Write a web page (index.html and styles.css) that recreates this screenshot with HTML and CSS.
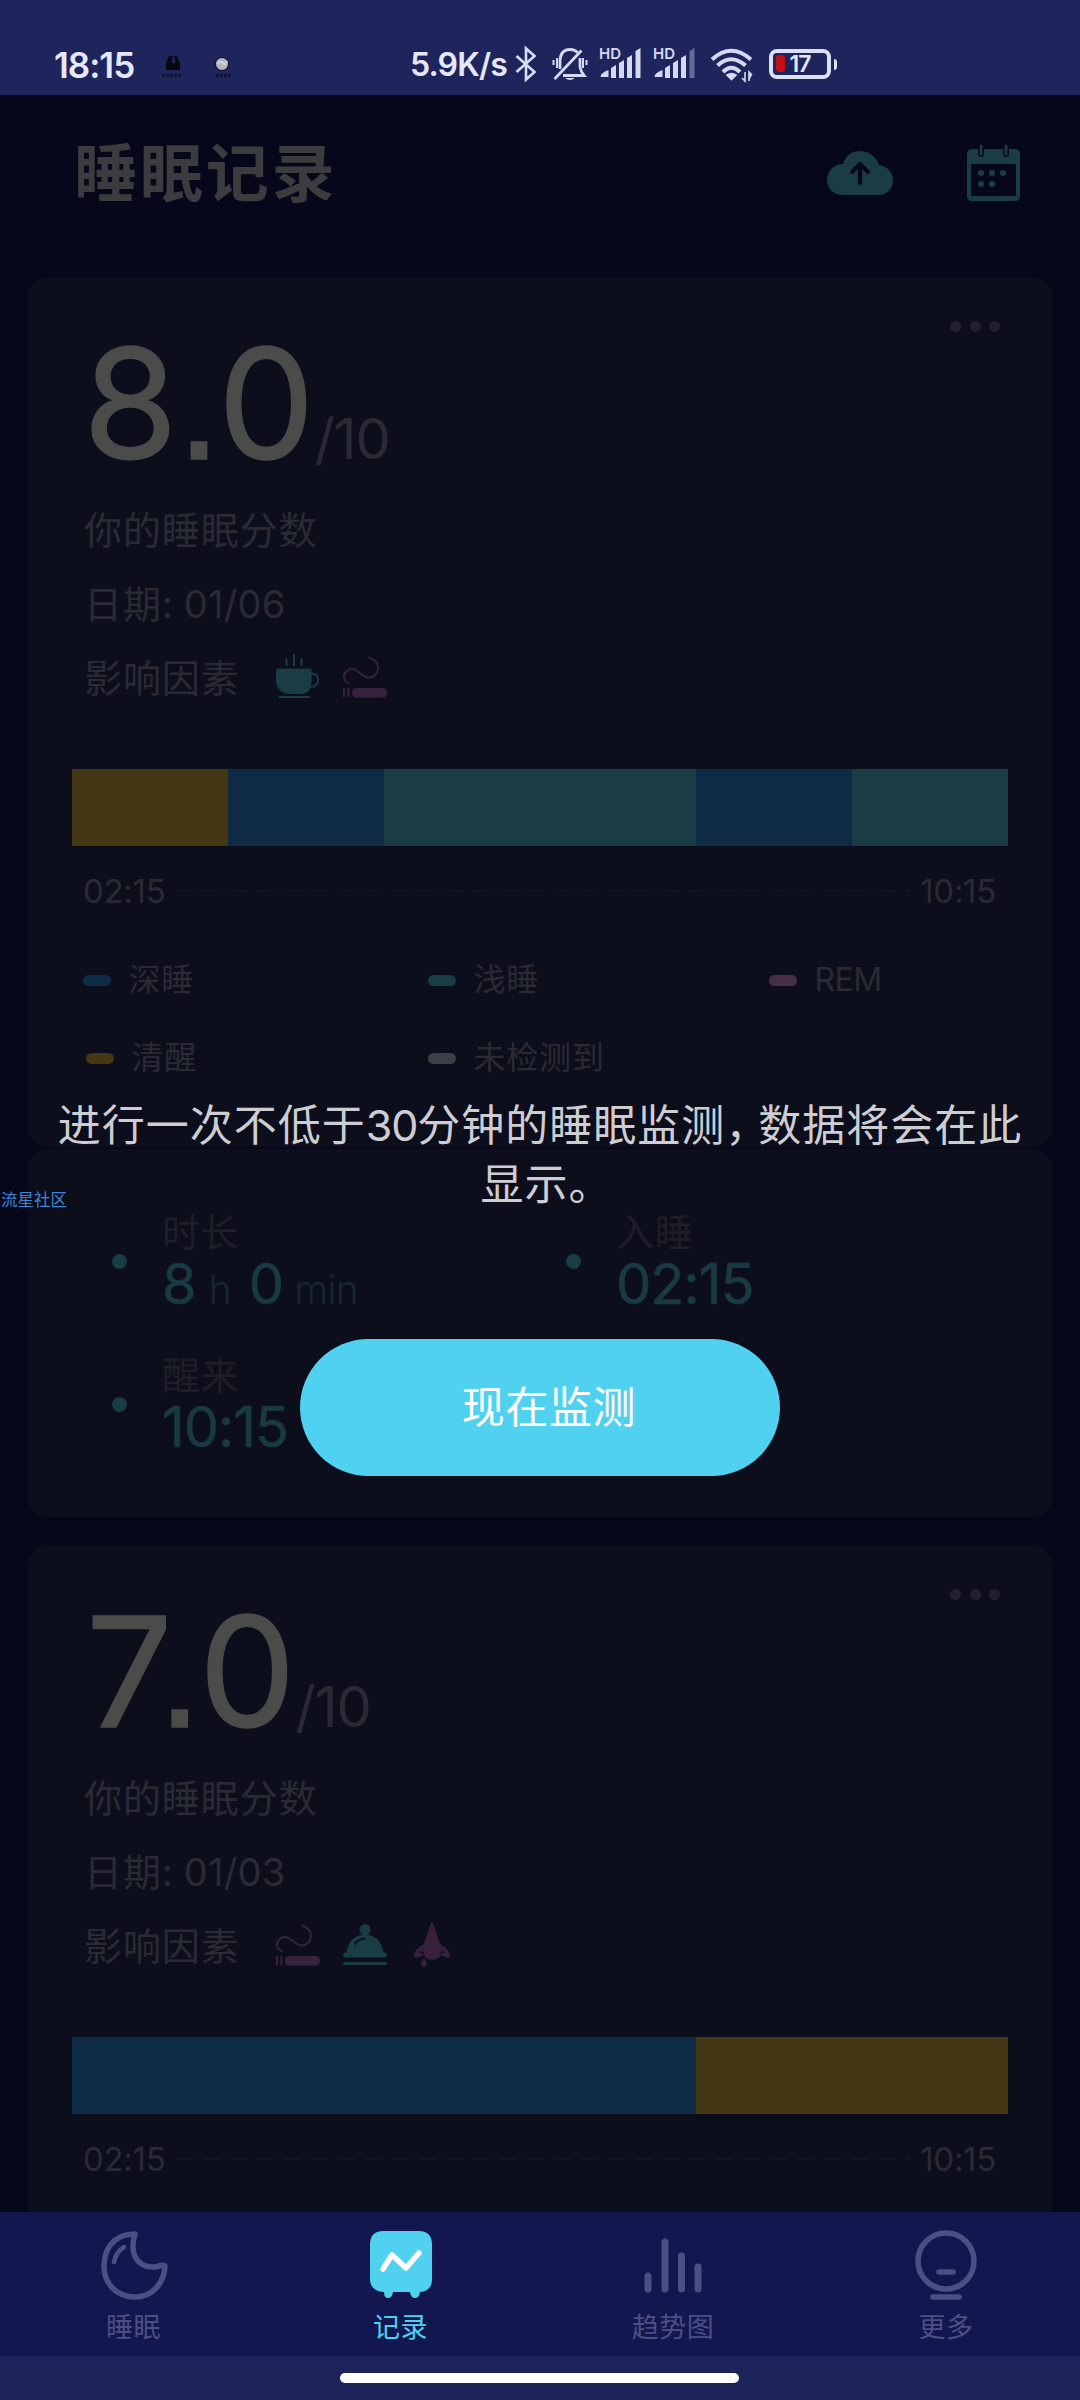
FILE: index.html
```html
<!DOCTYPE html>
<html lang="zh-CN">
<head>
<meta charset="utf-8">
<title>睡眠记录</title>
<link rel="stylesheet" href="styles.css">
</head>
<body>
<svg class="defs" width="0" height="0">
  <symbol id="cigarette" viewBox="0 0 44 44">
    <path d="M26 3.500q9 3 9 10c0 6-4 10-9 10-8 0-10-8.500-17-8.500-5 0-8 4-8 8 0 3 2 5 5 6.500" fill="none" stroke="currentColor" stroke-width="1.900" stroke-linecap="round"/>
    <rect x="0" y="34" width="2" height="9" fill="currentColor"/><rect x="4.300" y="34" width="2" height="9" fill="currentColor"/>
    <rect x="9" y="34" width="35" height="9.500" rx="4.500" fill="currentColor"/>
  </symbol>
  <symbol id="cup" viewBox="0 0 44 44">
    <path d="M1.500 14.500h32q2 0 2 2V28q0 11-10 12h-12Q1 39 0 27V16.500q0-2 1.500-2Z" fill="currentColor"/>
    <path d="M35 20c9-2 10 12 0 13M10.500 11V5M18 11V1M25.500 11V5M3.500 43h30" fill="none" stroke="currentColor" stroke-width="2" stroke-linecap="round"/>
  </symbol>
  <symbol id="dish" viewBox="0 0 44 44">
    <circle cx="22" cy="7.500" r="5.500" fill="currentColor"/>
    <path d="M1.500 35.500Q0 35 0 33t3.500-3Q6 14 22 12q16 2 18.500 18 3.500 1 3.500 3t-1.500 2.500Z" fill="currentColor"/>
    <path d="M12 22q3-5 10-5.500" fill="none" stroke="#0d0e1b" stroke-width="2" stroke-linecap="round"/>
    <rect x="0" y="40" width="44" height="3" rx="1.500" fill="currentColor"/>
  </symbol>
  <symbol id="nose" viewBox="0 0 44 46">
    <path d="M22 1c3 2 5 17 9 23 8 4 10 9 8 12-3 2-5-2-8-1-5 5-12 5-17 0-3-1-5 3-9 1-2-3 0-8 8-12C17 18 19 3 22 1ZM14 37q-6 8 0 9 6-1 0-9Z" fill="currentColor"/>
    <path d="M9 31.500q4-2 5 3M35 31.500q-4-2-5 3" fill="none" stroke="#0d0e1b" stroke-width="1.300"/>
  </symbol>
</svg>
<div class="phone">
  <div class="statusbar">
    <span class="clock">18:15</span>
    <svg class="notify" width="80" height="28" viewBox="0 0 80 28">
      <path d="M6 14l3-8h3v5h-1l2.500 3 2.500-3h-1V6h2l3 8v6H6Z" fill="#06070f"/><path d="M8 13l3-6h5l3 6" fill="none" stroke="#06070f"/>
      <path d="M2 25.500h20M56 25.500h15" stroke="#11143a" stroke-width="3" stroke-dasharray="3 1"/>
      <circle cx="62" cy="14" r="6.500" fill="#b3b4bd" stroke="#080a18"/><path d="M57 14q4-4 6-1t4-2" fill="none" stroke="#d3d4da" stroke-width="2"/>
    </svg>
    <span class="speed">5.9K/s</span>
    <svg class="bt" width="22" height="36" viewBox="0 0 22 36"><path d="M1.500 10l18 16L11 33.500V2.500L19.500 10l-18 16" fill="none" stroke="#d8dcf3" stroke-width="2.600"/></svg>
    <svg class="bell" width="36" height="36" viewBox="0 0 36 36">
      <g fill="none" stroke="#d5d8ee" stroke-width="2.800"><path d="M8 23V14Q9 3.500 18 3.500q5 0 7.500 3M28 12v9q1 5 4 8.500H11M2.500 33L29.500 4.500" /><path d="M5 12v10M1.500 14v5M31 12v10M34.500 14v5" stroke-width="2"/></g>
      <path d="M13 32h10q-5 4-10 0Z" fill="#d5d8ee"/>
    </svg>
    <svg class="signal" width="42" height="34" viewBox="0 0 42 34">
      <text x="0" y="13" class="hd">HD</text>
      <g fill="#d5d8ee"><path d="M1.500 31q0-4 8-7v7ZM12 22l5-3v13h-5ZM20 17l5-3v18h-5ZM28 12l5-3v23h-5ZM36.500 5l5-3v30h-5Z"/></g>
    </svg>
    <svg class="signal" width="42" height="34" viewBox="0 0 42 34">
      <text x="0" y="13" class="hd">HD</text>
      <g fill="#d5d8ee"><path d="M1.500 31q0-4 8-7v7ZM12 22l5-3v13h-5ZM20 17l5-3v18h-5ZM28 12l5-3v23h-5Z"/><path d="M36.500 5l5-3v30h-5Z" opacity=".4"/></g>
    </svg>
    <svg class="wifi" width="44" height="36" viewBox="0 0 44 36">
      <g fill="none" stroke="#d5d8ee" stroke-width="4"><path d="M2 12.500Q21 -5 41 12.500M7.500 18.500Q21 6 35.500 18.500M13 25Q21.500 16.500 30 25"/></g>
      <path d="M17 28q4.500-3 9 0l-4.500 4.500ZM35 34v-9 9l-3-3M39 34v-9l3 3" fill="#d5d8ee" stroke="#d5d8ee" stroke-width="1.600"/>
    </svg>
    <svg class="battery" width="70" height="32" viewBox="0 0 70 32">
      <rect x="2" y="3" width="58" height="26" rx="6" fill="none" stroke="#dcdff2" stroke-width="4"/><path d="M65 11q3 0 3 3v5q0 3-3 3Z" fill="#dcdff2"/>
      <rect x="7" y="7" width="9" height="17" rx="3" fill="#c40d14"/><text x="20.500" y="24" class="pct">17</text>
    </svg>
  </div>

  <main class="screen">
    <header class="header">
      <h1>睡眠记录</h1>
      <svg class="cloud" width="66" height="46" viewBox="0 0 66 46">
        <path d="M16 45C6 45 0 38 0 30s6-16 16-16C19 5 25 1 33 1s16 5 19 14c8 1 14 7 14 15 0 9-6 15-15 15Z" fill="#193c45"/>
        <path d="M33 33V15M25 22l8-8 8 8" fill="none" stroke="#06071a" stroke-width="4.200" stroke-linecap="round" stroke-linejoin="round"/>
      </svg>
      <svg class="calendar" width="53" height="56" viewBox="0 0 53 56">
        <path d="M5 4h43q5 0 5 5v42q0 5-5 5H5q-5 0-5-5V9q0-5 5-5Zm-1 15v32h45V19Z" fill="#193c45" fill-rule="evenodd"/>
        <path d="M14 0v9M39 0v9" stroke="#06071a" stroke-width="6" stroke-linecap="round"/><path d="M14 1v8M39 1v8" stroke="#193c45" stroke-width="3" stroke-linecap="round"/>
        <g fill="#193c45"><circle cx="14" cy="28" r="3"/><circle cx="25" cy="28" r="3"/><circle cx="36" cy="28" r="3"/><circle cx="14" cy="39" r="3"/><circle cx="25" cy="39" r="3"/></g>
      </svg>
    </header>

    <section class="card">
      <div class="more"><i></i><i></i><i></i></div>
      <div class="score"><b>8<em>.</em>0</b><span>/10</span></div>
      <div class="line">你的睡眠分数</div>
      <div class="line">日期<span class="date">: 01/06</span></div>
      <div class="line factors">影响因素
        <svg class="teal" width="44" height="44"><use href="#cup"/></svg>
        <svg class="plum" width="44" height="44"><use href="#cigarette"/></svg>
      </div>
      <div class="stages"><i class="awake"></i><i class="deep"></i><i class="light w2"></i><i class="deep"></i><i class="light"></i></div>
      <div class="times"><span>02:15</span><i></i><span class="end">10:15</span></div>
      <div class="legend">
        <span><i class="deep"></i>深睡</span><span><i class="light"></i>浅睡</span><span class="en"><i class="rem"></i>REM</span>
        <span class="nudge"><i class="awake"></i>清醒</span><span><i class="none"></i>未检测到</span>
      </div>
    </section>

    <section class="card stats">
      <div class="stat"><i></i><div><p>时长</p><strong>8<small>h</small>0<small class="m">min</small></strong></div></div>
      <div class="stat"><i></i><div><p>入睡</p><strong>02:15</strong></div></div>
      <div class="stat"><i></i><div><p>醒来</p><strong>10:15</strong></div></div>
    </section>

    <section class="card next">
      <div class="more"><i></i><i></i><i></i></div>
      <div class="score seven"><b>7<em>.</em>0</b><span>/10</span></div>
      <div class="line">你的睡眠分数</div>
      <div class="line">日期<span class="date">: 01/03</span></div>
      <div class="line factors">影响因素
        <svg class="plum" width="44" height="44"><use href="#cigarette"/></svg>
        <svg class="teal" width="44" height="44"><use href="#dish"/></svg>
        <svg class="plum" width="44" height="46"><use href="#nose"/></svg>
      </div>
      <div class="stages"><i class="deep w4"></i><i class="awake w2"></i></div>
      <div class="times"><span>02:15</span><i></i><span class="end">10:15</span></div>
    </section>
  </main>

  <nav class="tabs">
    <a class="tab"><svg width="68" height="70" viewBox="0 0 68 70"><path d="M35 4C12 4 4 21 4 36c0 18 13 31 31 31 17 0 29-13 30-31-4-3-6 2-13 1-18-1-22-17-17-33Z" fill="none" stroke="currentColor" stroke-width="5.500" stroke-linejoin="round"/><path d="M14 32q2-10 10-15" fill="none" stroke="currentColor" stroke-width="4.500" stroke-linecap="round"/></svg>睡眠</a>
    <a class="tab active"><svg width="62" height="70" viewBox="0 0 62 70"><path d="M13 1h36q13 0 13 14v34q0 12-12 13-1 6-5 6t-5-6H23q-1 6-5 6t-4-6Q0 61 0 49V15Q0 1 13 1Z" fill="currentColor"/><path d="M13 39l9-14 14 13 13-15" fill="none" stroke="#fff" stroke-width="5.500" stroke-linecap="round" stroke-linejoin="round"/></svg>记录</a>
    <a class="tab"><svg width="60" height="70" viewBox="0 0 60 70"><path d="M5 46v13M22 12v47M38.500 26v33M55 37v22" stroke="currentColor" stroke-width="7" stroke-linecap="round"/></svg>趋势图</a>
    <a class="tab"><svg width="62" height="70" viewBox="0 0 62 70"><circle cx="31" cy="31" r="28" fill="none" stroke="currentColor" stroke-width="5.500"/><path d="M24 42h14M18 67h26" stroke="currentColor" stroke-width="5.500" stroke-linecap="round"/></svg>更多</a>
  </nav>
  <div class="gesture"><i></i></div>

  <div class="prompt">
    <p>进行一次不低于<span class="num">30</span>分钟的睡眠监测<span class="comma">，</span>数据将会在此</p>
    <p>显示<span class="stop">。</span></p>
    <button>现在监测</button>
  </div>
  <span class="watermark">流星社区</span>
</div>
</body>
</html>
```
FILE: styles.css
```css
* { box-sizing: border-box; }
body, h1, p { margin: 0; }
body { background: #06071a; font-family: Inter, "Noto Sans CJK SC", sans-serif; }
svg { display: block; flex: none; overflow: visible; }
i { display: block; font-style: normal; flex: none; }
.defs { position: absolute; }
.phone { position: relative; width: 1080px; height: 2400px; overflow: hidden; display: flex; flex-direction: column; }

.statusbar { height: 95px; flex: none; background: #1d255c; display: flex; align-items: flex-start; padding: 46px 0 0 54px; color: #e6e8fa; line-height: 38px; white-space: nowrap; }
.clock { width: 106px; font-size: 35px; font-weight: 600; letter-spacing: -1px; }
.notify { margin-top: 4px; }
.speed { margin-left: 170px; width: 105px; font-size: 32px; font-weight: 600; letter-spacing: -0.8px; }
.bell { margin-left: 15px; }
.signal { margin-left: 12px; }
.bell + .signal { margin-left: 11px; }
.hd { font: 600 15px/1 Inter, sans-serif; fill: #d5d8ee; }
.wifi { margin: 1px 0 0 15px; }
.battery { margin: 2px 0 0 15px; }
.pct { font: 600 23px Inter, sans-serif; letter-spacing: -1px; fill: #e6e8fa; }

.screen { height: 2117px; flex: none; overflow: hidden; padding: 0 28px; }
.header { height: 182px; display: flex; align-items: center; padding: 0 32px 26px 46px; }
h1 { font-size: 63px; line-height: 80px; font-weight: 700; letter-spacing: 2.9px; color: #3c3c3f; margin-right: auto; }
.calendar { margin-left: 74px; }

.card { position: relative; background: #0d0e1b; border-radius: 20px; padding: 71px 44px 50px; height: 870px; color: #292a34; }
.more { position: absolute; top: 44px; right: 52px; display: flex; gap: 8.500px; }
.more i { width: 11px; height: 11px; border-radius: 50%; background: #20212c; }
.score { height: 111px; line-height: 111px; white-space: nowrap; padding-left: 11px; font-size: 153px; }
.score b { font-weight: 400; color: #4b4b4a; -webkit-text-stroke: 1.5px #4b4b4a; }
.score em { font-family: "Liberation Sans", sans-serif; font-style: normal; font-size: 160px; line-height: 100px; margin: 0 -3px 0 -1px; }
.seven { padding-left: 14px; }
.seven em { margin-left: -15px; }
.score span { font-size: 56px; line-height: 40px; letter-spacing: -1px; }
.line { height: 74px; line-height: 74px; font-size: 38px; letter-spacing: 0.9px; padding-left: 12px; display: flex; align-items: center; white-space: pre; }
.score + .line { margin-top: 34px; }
.date { letter-spacing: 0.2px; }
.factors { white-space: normal; gap: 23px; }
.factors svg { margin-bottom: 5px; }
.factors svg:first-of-type { margin-left: 13px; }
.teal { color: #193c45; }
.plum { color: #38213d; }

.stages { display: flex; height: 77px; margin-top: 54px; }
.stages i { flex: 1; }
.stages .w2 { flex: 2; }
.stages .w4 { flex: 4; }
.deep { background: #0e2b46; }
.light { background: #193c45; }
.awake { background: #463714; }
.rem { background: #452f4b; }
.none { background: #3c4044; }
.times { height: 30px; line-height: 30px; margin: 30px 12px 0 11px; display: flex; align-items: center; justify-content: space-between; font-size: 33px; letter-spacing: -0.3px; }
.times i { width: 734px; height: 2px; background: repeating-linear-gradient(90deg, #12141f 0 17px, transparent 17px 27px); }
.legend { display: grid; grid-template-columns: 345px 341px 1fr; grid-auto-rows: 78px; margin-top: 35px; padding-left: 11px; font-size: 32px; letter-spacing: 0.8px; line-height: 78px; }
.legend span { display: flex; align-items: center; gap: 17.500px; }
.legend .en { letter-spacing: -0.5px; }
.legend i { width: 28px; height: 11px; border-radius: 6px; }
.nudge { padding-left: 3px; }

.stats { margin-top: 2px; height: 368px; padding: 57px 84px 64px; display: grid; grid-template-columns: 454px 1fr; grid-auto-rows: 104px; row-gap: 39px; }
.stat { display: flex; align-items: center; gap: 35px; white-space: nowrap; }
.stat > i { width: 15px; height: 15px; margin-top: 7px; border-radius: 50%; background: #193c45; }
.stat p { font-size: 38px; line-height: 52px; letter-spacing: 0.8px; color: #1d1e28; }
.stat strong { display: block; font-size: 56px; line-height: 52px; font-weight: 400; letter-spacing: -1px; color: #193a43; -webkit-text-stroke: 0.6px #193a43; }
.stat small { font-size: 39px; line-height: 20px; font-weight: 300; letter-spacing: -0.8px; margin: 0 18px 0 13px; color: #15272f; -webkit-text-stroke: 0; }
.stat .m { margin: 0 0 0 11px; }
.next { margin-top: 28px; }

.tabs { height: 144px; flex: none; background: #131750; display: grid; grid-template-columns: 267px 267px 278px 268px; }
.tab { display: flex; flex-direction: column; align-items: center; padding-top: 18px; font-size: 27px; letter-spacing: 0.5px; line-height: 56px; color: #4c4f82; }
.active { color: #50d1ef; }
.gesture { flex: 1; background: #1d245a; padding: 17px 0 0 340px; }
.gesture i { width: 399px; height: 10px; border-radius: 5px; background: #fff; }

.prompt { position: absolute; top: 1096px; left: 1px; width: 1078px; display: flex; flex-direction: column; align-items: center; font-size: 43px; line-height: 59px; letter-spacing: 1px; color: #cdcdd3; white-space: nowrap; }
.num { letter-spacing: -1px; }
.comma { display: inline-block; width: 33px; }
.stop { display: inline-block; width: 31px; }
.prompt button { width: 480px; height: 137px; margin-top: 125px; padding: 0 0 0 18px; border: 0; border-radius: 69px; background: #50d1ef; color: #fff; font: 400 43px/137px Inter, "Noto Sans CJK SC", sans-serif; letter-spacing: 0.6px; }
.watermark { position: absolute; left: 1px; top: 1190px; font-size: 16.500px; line-height: 20px; color: #3a86dc; }
```
